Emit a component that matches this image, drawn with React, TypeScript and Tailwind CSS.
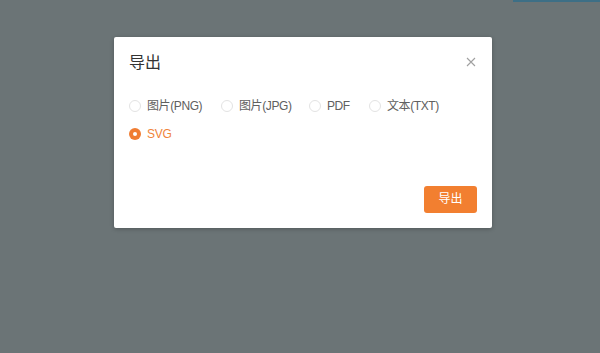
import React from "react";

const options = [
  { label: "图片(PNG)", w: "w-[92px]" },
  { label: "图片(JPG)", w: "w-[88px]" },
  { label: "PDF", w: "w-[60px]" },
  { label: "文本(TXT)", w: "w-[90px]" },
];

function Radio({ checked }: { checked?: boolean }) {
  return checked ? (
    <span className="w-[12px] h-[12px] rounded-full bg-[#f07d32] flex items-center justify-center shrink-0">
      <span className="w-[4px] h-[4px] rounded-full bg-white" />
    </span>
  ) : (
    <span className="w-[12px] h-[12px] rounded-full border border-[#e3e3e3] bg-white shrink-0" />
  );
}

export default function App() {
  return (
    <div
      className="w-[600px] h-[353px] bg-[#6b7476] relative overflow-hidden"
      style={{ fontFamily: '"Liberation Sans", "Noto Sans CJK SC", sans-serif' }}
    >
      <div className="absolute top-0 left-[513px] w-[87px] h-[2px] bg-[#3d6f86]" />
      <div className="pl-[114px] pt-[37px]">
        <div className="w-[378px] h-[191px] bg-white rounded-[2px] shadow-[0_1px_4px_rgba(0,0,0,0.25)] flex flex-col">
          <div className="flex items-center justify-between pl-[15px] pr-[16px] pt-[11px] h-[40px]">
            <span className="text-[16px] leading-[24px] text-[#333]">导出</span>
            <svg width="10" height="10" viewBox="0 0 10 10" className="mt-[-1px]">
              <path d="M1 1L9 9M9 1L1 9" stroke="#a0a0a0" strokeWidth="1.1" />
            </svg>
          </div>
          <div className="pl-[15px] pt-[20px] flex flex-col gap-[10px]">
            <div className="flex items-center h-[18px]">
              {options.map((o) => (
                <div key={o.label} className={`flex items-center gap-[6px] ${o.w}`}>
                  <Radio />
                  <span className="text-[12px] leading-[18px] tracking-[-0.4px] text-[#606060]">{o.label}</span>
                </div>
              ))}
            </div>
            <div className="flex items-center gap-[6px] h-[18px]">
              <Radio checked />
              <span className="text-[12px] leading-[18px] tracking-[-0.2px] text-[#f0843a]">SVG</span>
            </div>
          </div>
          <div className="flex-1" />
          <div className="flex justify-end pr-[15px] pb-[15px]">
            <button className="w-[53px] h-[27px] rounded-[3px] bg-[#f27f30] text-white text-[12px] leading-[27px] text-center">
              导出
            </button>
          </div>
        </div>
      </div>
    </div>
  );
}
